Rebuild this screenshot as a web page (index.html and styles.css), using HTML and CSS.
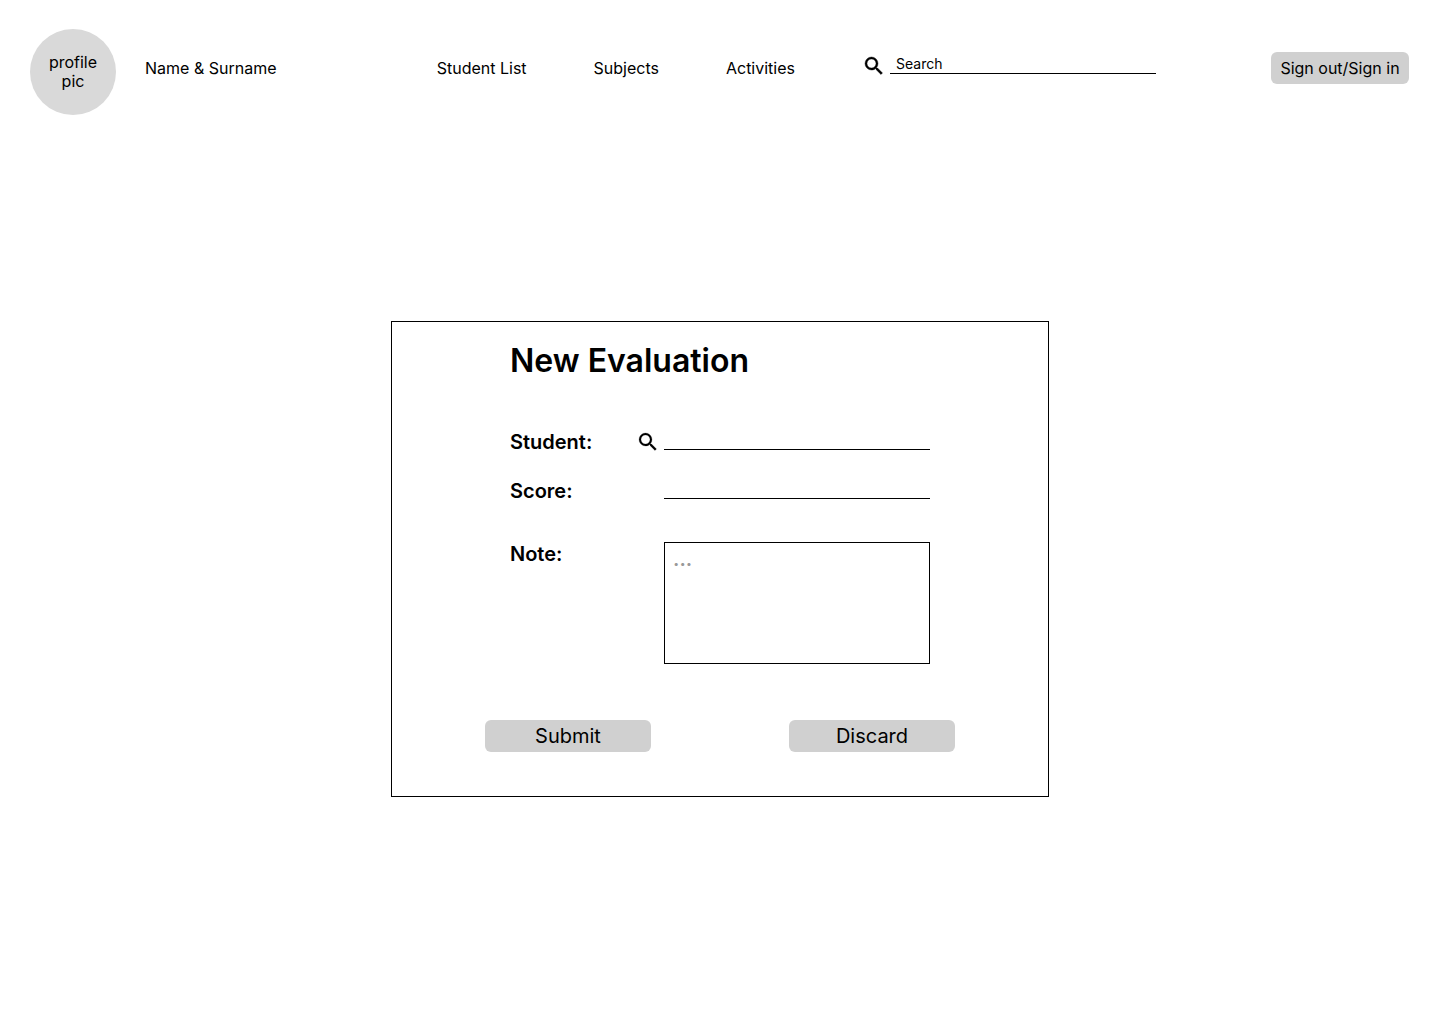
FILE: index.html
```html
<!DOCTYPE html>
<html lang="en">
<head>
  <meta charset="utf-8">
  <meta name="viewport" content="width=device-width, initial-scale=1">
  <title>New Evaluation</title>
  <link rel="stylesheet" href="styles.css">
</head>
<body>
  <header class="header">
    <div class="avatar">profile<br>pic</div>
    <div class="bar">
      <span class="user-name">Name &amp; Surname</span>
      <div class="bar-middle">
        <nav class="nav">
          <a href="#students">Student List</a>
          <a href="#subjects">Subjects</a>
          <a href="#activities">Activities</a>
        </nav>
        <form class="search" role="search">
          <svg class="icon icon-bold" viewBox="0 0 24 24" aria-hidden="true"><path d="M15.5 14h-.79l-.28-.27A6.471 6.471 0 0 0 16 9.5 6.5 6.5 0 1 0 9.5 16c1.61 0 3.09-.59 4.23-1.57l.27.28v.79l5 4.99L20.49 19l-4.99-5zm-6 0C7.01 14 5 11.99 5 9.5S7.01 5 9.5 5 14 7.01 14 9.5 11.99 14 9.5 14z"/></svg>
          <input class="line-input search-input" type="search" placeholder="Search" aria-label="Search">
        </form>
      </div>
      <button class="button button-sign" type="button">Sign out/Sign in</button>
    </div>
  </header>

  <main class="main">
    <form class="card">
      <h1 class="title">New Evaluation</h1>
      <div class="fields">
        <div class="field">
          <label for="student">Student:</label>
          <svg class="icon" viewBox="0 0 24 24" aria-hidden="true"><path d="M15.5 14h-.79l-.28-.27A6.471 6.471 0 0 0 16 9.5 6.5 6.5 0 1 0 9.5 16c1.61 0 3.09-.59 4.23-1.57l.27.28v.79l5 4.99L20.49 19l-4.99-5zm-6 0C7.01 14 5 11.99 5 9.5S7.01 5 9.5 5 14 7.01 14 9.5 11.99 14 9.5 14z"/></svg>
          <input class="line-input control" id="student" type="text">
        </div>
        <div class="field">
          <label for="score">Score:</label>
          <input class="line-input control" id="score" type="text">
        </div>
        <div class="field field-note">
          <label for="note">Note:</label>
          <textarea class="note control" id="note" placeholder="..."></textarea>
        </div>
      </div>
      <div class="actions">
        <button class="button" type="submit">Submit</button>
        <button class="button" type="reset">Discard</button>
      </div>
    </form>
  </main>
</body>
</html>
```
FILE: styles.css
```css
* {
  box-sizing: border-box;
}

body {
  margin: 0;
  background: #fff;
  color: #000;
  font: 16px/20px Inter, sans-serif;
}

input,
textarea,
button {
  margin: 0;
  color: inherit;
  font-family: inherit;
}

.header {
  display: flex;
  gap: 29px;
  padding: 29px 31px 0 30px;
}

.avatar {
  display: flex;
  flex: none;
  align-items: center;
  justify-content: center;
  width: 86px;
  height: 86px;
  border-radius: 50%;
  background: #d9d9d9;
  line-height: 19px;
  text-align: center;
}

.bar {
  display: flex;
  flex: 1;
  align-items: center;
  height: 78px;
}

.user-name {
  flex: 1;
}

.bar-middle,
.nav {
  display: flex;
  align-items: center;
  gap: 67px;
}

.nav a {
  color: inherit;
  text-decoration: none;
  white-space: nowrap;
}

.search {
  display: flex;
  align-items: flex-start;
  gap: 4px;
  padding-bottom: 4px;
}

.icon {
  display: block;
  flex: none;
  width: 24px;
  height: 24px;
  stroke: #000;
  stroke-width: 0.2;
}

.icon-bold {
  stroke-width: 0.4;
}

.line-input {
  height: 20px;
  padding: 0 6px;
  border: 0;
  border-bottom: 1px solid #000;
  border-radius: 0;
  outline: 0;
  background: transparent;
  font-size: 14px;
  appearance: none;
}

.search-input {
  width: 266px;
}

.line-input::placeholder {
  color: #000;
  opacity: 1;
}

.button {
  width: 166px;
  height: 32px;
  padding: 0;
  border: 0;
  border-radius: 6px;
  background: #d0d0d0;
  font-size: 20px;
  line-height: 24px;
}

.button-sign {
  width: 138px;
  margin-left: 115px;
  font-size: 16px;
}

.main {
  display: flex;
  justify-content: center;
  padding: 206px 20px 40px;
}

.card {
  display: flex;
  flex-direction: column;
  align-items: center;
  width: 658px;
  padding: 19px 20px 44px;
  border: 1px solid #000;
}

.title {
  width: 420px;
  margin: 0;
  font-size: 32px;
  font-weight: 600;
  line-height: 39px;
}

.fields {
  display: grid;
  gap: 25px;
  width: 420px;
  margin-top: 50px;
}

.field {
  display: grid;
  grid-template-columns: 122px 24px 1fr;
  column-gap: 4px;
  align-items: start;
}

.field label {
  font-size: 20px;
  font-weight: 600;
  line-height: 24px;
}

.control {
  grid-column: 3;
}

.field-note {
  margin-top: 14px;
}

.note {
  display: block;
  width: 100%;
  height: 122px;
  padding: 4px 8px;
  border: 1px solid #000;
  border-radius: 0;
  outline: 0;
  background: transparent;
  font-size: 20px;
  line-height: 24px;
  resize: none;
}

.note::placeholder {
  color: #999;
  font-weight: 600;
  opacity: 1;
}

.actions {
  display: flex;
  justify-content: space-between;
  width: 470px;
  margin-top: 56px;
}
```
